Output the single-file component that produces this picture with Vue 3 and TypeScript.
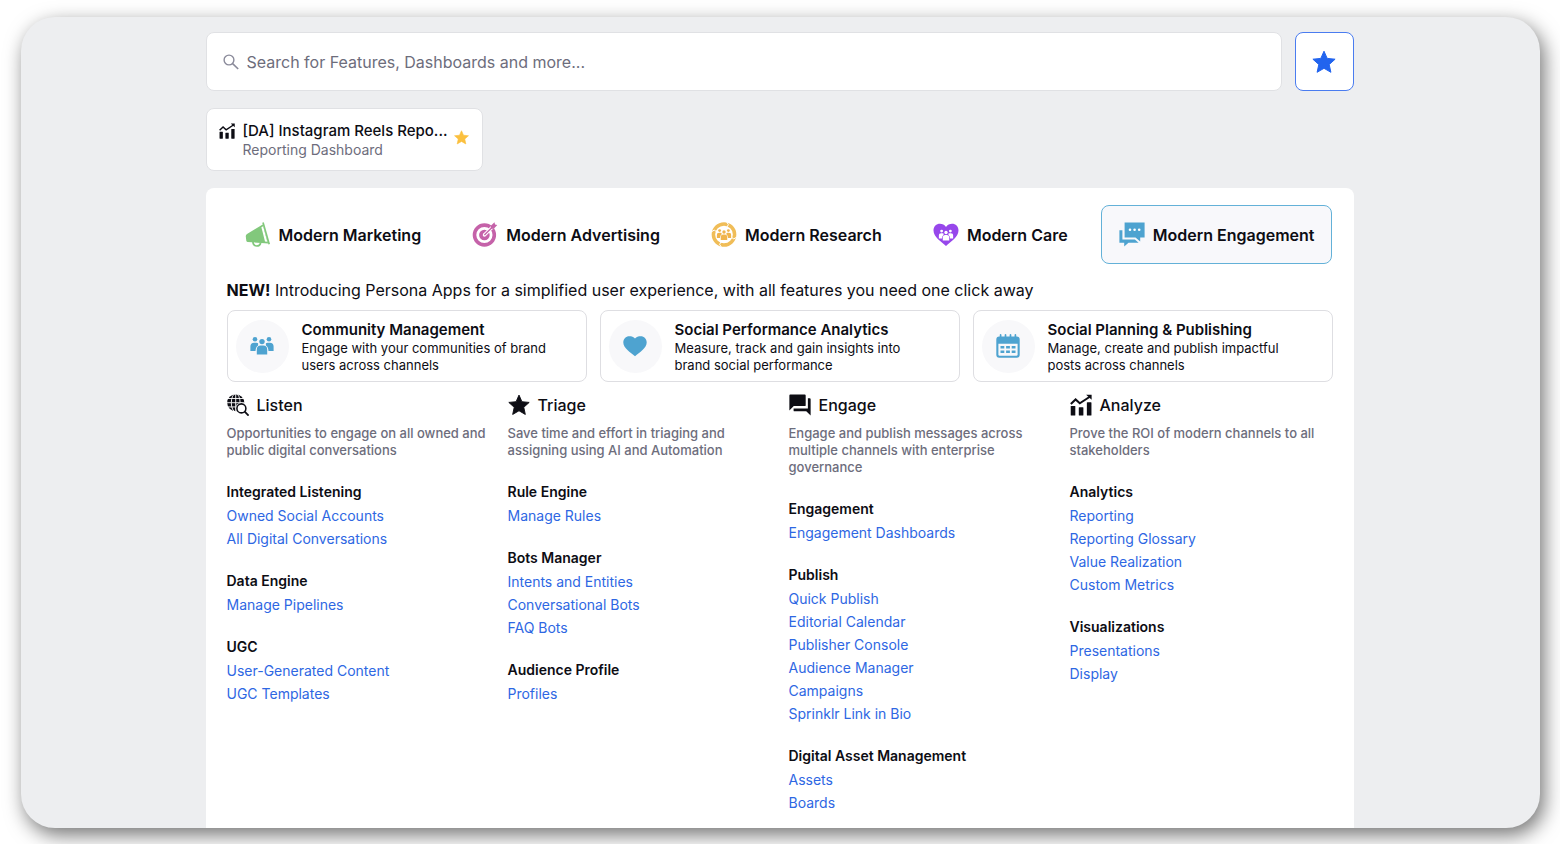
<script setup lang="ts">
import { ref } from 'vue'

interface Group {
  title: string
  links: string[]
}
interface Column {
  title: string
  icon: string
  text: string
  groups: Group[]
}

const query = ref('')
const activeTab = ref('Modern Engagement')

const tabs = [
  { name: 'Modern Marketing', icon: 'megaphone' },
  { name: 'Modern Advertising', icon: 'target' },
  { name: 'Modern Research', icon: 'research' },
  { name: 'Modern Care', icon: 'care' },
  { name: 'Modern Engagement', icon: 'chat' },
]

const apps = [
  { name: 'Community Management', icon: 'people', text: 'Engage with your communities of brand users across channels' },
  { name: 'Social Performance Analytics', icon: 'heart', text: 'Measure, track and gain insights into brand social performance' },
  { name: 'Social Planning & Publishing', icon: 'calendar', text: 'Manage, create and publish impactful posts across channels' },
]

const columns: Column[] = [
  {
    title: 'Listen',
    icon: 'globe',
    text: 'Opportunities to engage on all owned and public digital conversations',
    groups: [
      { title: 'Integrated Listening', links: ['Owned Social Accounts', 'All Digital Conversations'] },
      { title: 'Data Engine', links: ['Manage Pipelines'] },
      { title: 'UGC', links: ['User-Generated Content', 'UGC Templates'] },
    ],
  },
  {
    title: 'Triage',
    icon: 'star',
    text: 'Save time and effort in triaging and assigning using AI and Automation',
    groups: [
      { title: 'Rule Engine', links: ['Manage Rules'] },
      { title: 'Bots Manager', links: ['Intents and Entities', 'Conversational Bots', 'FAQ Bots'] },
      { title: 'Audience Profile', links: ['Profiles'] },
    ],
  },
  {
    title: 'Engage',
    icon: 'forum',
    text: 'Engage and publish messages across multiple channels with enterprise governance',
    groups: [
      { title: 'Engagement', links: ['Engagement Dashboards'] },
      {
        title: 'Publish',
        links: ['Quick Publish', 'Editorial Calendar', 'Publisher Console', 'Audience Manager', 'Campaigns', 'Sprinklr Link in Bio'],
      },
      { title: 'Digital Asset Management', links: ['Assets', 'Boards'] },
    ],
  },
  {
    title: 'Analyze',
    icon: 'chart',
    text: 'Prove the ROI of modern channels to all stakeholders',
    groups: [
      { title: 'Analytics', links: ['Reporting', 'Reporting Glossary', 'Value Realization', 'Custom Metrics'] },
      { title: 'Visualizations', links: ['Presentations', 'Display'] },
    ],
  },
]
</script>

<template>
  <div class="stage">
    <svg class="defs" aria-hidden="true">
      <symbol id="star" viewBox="0 0 24 24">
        <path d="M12 1.200l3.200 7.200 7.900.8-5.900 5.300 1.700 7.800L12 18.300l-6.900 4 1.700-7.800L.9 9.200l7.900-.8z" fill="currentColor" stroke="currentColor" stroke-width="1" stroke-linejoin="round" />
      </symbol>
      <symbol id="chart" viewBox="0 0 24 24">
        <g fill="currentColor">
          <rect x="0.8" y="13" width="5" height="10.5" rx=".6" />
          <rect x="9.6" y="14.5" width="5" height="9" rx=".6" />
          <rect x="18.4" y="9" width="5" height="14.5" rx=".6" />
          <path d="M17.6 .8h6v5.400z" />
        </g>
        <path d="M.9 11l5.200-5 4.600 4.200L21.600 3" fill="none" stroke="currentColor" stroke-width="2.2" />
      </symbol>
      <symbol id="forum" viewBox="0 0 24 24">
        <path d="M1.4 .5h15.800a1 1 0 0 1 1 1v10.700a1 1 0 0 1-1 1H5.200L.4 18V1.500a1 1 0 0 1 1-1z" fill="currentColor" />
        <path d="M20.600 4.700h2a1 1 0 0 1 1 1v17.800l-4.800-4.600H6a1 1 0 0 1-1-1v-2.200h15.600z" fill="currentColor" />
      </symbol>
      <symbol id="globe" viewBox="0 0 24 24">
        <circle cx="9.500" cy="9.500" r="9.300" fill="currentColor" />
        <g fill="none" stroke="#fff" stroke-width="1">
          <ellipse cx="9.500" cy="9.500" rx="4.800" ry="10" />
          <path d="M9.500 0v19M0 9.500h19M1 4.900h17M1 14.100h17" />
        </g>
        <circle cx="15.700" cy="15.700" r="6.300" fill="#fff" />
        <circle cx="15.700" cy="15.700" r="4.900" fill="#fff" stroke="currentColor" stroke-width="1.700" />
        <path d="M19 19l4.600 4.600" stroke="currentColor" stroke-width="2" />
      </symbol>
      <symbol id="search" viewBox="0 0 16 16">
        <circle cx="6" cy="6" r="4.900" fill="none" stroke="currentColor" stroke-width="1.400" />
        <path d="M9.600 9.600l5.600 5.400" stroke="currentColor" stroke-width="1.600" />
      </symbol>
      <symbol id="people" viewBox="0 0 24 20">
        <g fill="currentColor">
          <circle cx="5" cy="3.300" r="2.300" />
          <circle cx="19" cy="3.300" r="2.300" />
          <path d="M0.400 15V10.500a3.800 3.800 0 0 1 3.800-3.800h2.200q1 0 1.700.5V9.500Q5.800 10.700 5.500 15z" />
          <path d="M23.600 15V10.500a3.800 3.800 0 0 0-3.800-3.800h-2.200q-1 0-1.700.5V9.500Q18.200 10.700 18.500 15z" />
          <circle cx="12" cy="5.600" r="2.700" />
          <path d="M6.800 18.500V13.500a4 4 0 0 1 4-4h2.400a4 4 0 0 1 4 4v5z" />
        </g>
      </symbol>
      <symbol id="heart" viewBox="0 0 24 24">
        <path d="M12 22.200C7.500 18.500.3 14.200.3 8.500.3 4.700 3 2.200 6.200 2.200c2.400 0 4.500.6 5.800 2.300 1.300-1.700 3.400-2.300 5.800-2.300 3.200 0 5.900 2.500 5.900 6.300 0 5.700-7.200 10-11.700 13.700z" fill="currentColor" />
      </symbol>
      <symbol id="calendar" viewBox="0 0 24 24">
        <path d="M3.300 2.600h17.400a3 3 0 0 1 3 3v15.200a3 3 0 0 1-3 3H3.300a3 3 0 0 1-3-3V5.600a3 3 0 0 1 3-3z" fill="currentColor" />
        <path d="M2.400 9.800h19.200v10.700a1.300 1.300 0 0 1-1.300 1.300H3.700a1.300 1.300 0 0 1-1.300-1.300z" fill="#f8f8fa" />
        <path d="M4.600 .9v3M9.500 .9v3M14.500 .9v3M19.400 .9v3" stroke="currentColor" stroke-width="1.700" stroke-linecap="round" />
        <path d="M4.500 13.200h3.800M10.100 13.200h3.800M15.700 13.200h3.800M4.500 17.700h3.800M10.100 17.700h3.800M15.700 17.700h3.800" stroke="currentColor" stroke-width="2.400" />
      </symbol>
      <symbol id="megaphone" viewBox="0 0 25 25">
        <path d="M7.300 19.500q.4 4.500 4 4.500 3.200 0 3.900-3" fill="none" stroke="#82c87c" stroke-width="1.700" />
        <path d="M2.300 19.900q-1.100 0-1.500-1.200L.3 14.500q-.2-1.700 1.200-2.600L17.200 2.600l5.500 18.900z" fill="#82c87c" />
        <path d="M15.900 5.300l1.800-1 4.100 15.500-2.300-.4z" fill="#fff" />
        <path d="M17.500.4l6.200 21.800" stroke="#82c87c" stroke-width="1.700" />
      </symbol>
      <symbol id="target" viewBox="0 0 25 25">
        <g fill="none" stroke="#c562a9">
          <circle cx="11.900" cy="13" r="9.900" stroke-width="3.600" />
          <circle cx="11.900" cy="13" r="3.500" stroke-width="3.600" />
        </g>
        <path d="M11.900 13L23 2" stroke="#fff" stroke-width="3.400" />
        <path d="M11.900 13L22 3" stroke="#c562a9" stroke-width="1.300" />
        <path d="M18.300 6.800V3.700L22 .2l.5 2.300 2.300.5-3.500 3.800z" fill="#c562a9" />
      </symbol>
      <symbol id="research" viewBox="0 0 25 25">
        <circle cx="12.500" cy="12.500" r="10.600" fill="none" stroke="#f0bd58" stroke-width="3.500" />
        <path d="M15.200 0l1.700 2.700-1.700 2.600M25 15.200l-2.700 1.700-2.600-1.700M9.800 25l-1.700-2.700 1.700-2.600M0 9.800l2.700-1.700 2.600 1.700" fill="none" stroke="#fff" stroke-width="1" />
        <use href="#people" x="5" y="6.500" width="15" height="12.500" color="#f0b44c" />
      </symbol>
      <symbol id="care" viewBox="0 0 25 25">
        <path d="M12.500 24C7.500 19.500 0 14.800 0 8.500 0 4.500 2.900 1.800 6.400 1.800c2.500 0 4.700 1.200 6.100 3.200 1.400-2 3.600-3.200 6.100-3.200 3.500 0 6.400 2.700 6.400 6.700 0 6.300-7.500 11-12.500 15.500z" fill="#9747eb" />
        <use href="#people" x="5" y="7" width="15" height="12.500" color="#fff" />
      </symbol>
      <symbol id="chat" viewBox="0 0 26 25">
        <path d="M.4 8.200h3v9.300h12.500l3.700 3.200H9.500L5.200 24.600v-3.900H.4z" fill="#4ea3d0" />
        <path d="M5.600.4h20v15h-4.400v4L16.500 15.400H5.600z" fill="#4ea3d0" />
        <g fill="#fff">
          <circle cx="11" cy="7.800" r="1.300" />
          <circle cx="15.600" cy="7.800" r="1.300" />
          <circle cx="20.200" cy="7.800" r="1.300" />
        </g>
      </symbol>
    </svg>

    <div class="frame">
      <main class="content">
        <div class="search-row">
          <label class="search">
            <svg class="search-icon" aria-hidden="true"><use href="#search" /></svg>
            <input v-model="query" type="text" aria-label="Search" placeholder="Search for Features, Dashboards and more..." />
          </label>
          <button class="fav-button" type="button" aria-label="Favorites">
            <svg aria-hidden="true"><use href="#star" /></svg>
          </button>
        </div>

        <article class="pinned">
          <svg class="pinned-icon" aria-hidden="true"><use href="#chart" /></svg>
          <div class="pinned-text">
            <a class="pinned-title" href="#">[DA] Instagram Reels Repo...</a>
            <span class="pinned-kind">Reporting Dashboard</span>
          </div>
          <button class="pinned-star" type="button" aria-label="Remove from favorites">
            <svg aria-hidden="true"><use href="#star" /></svg>
          </button>
        </article>

        <section class="panel">
          <nav class="tabs">
            <button
              v-for="tab in tabs"
              :key="tab.name"
              type="button"
              class="tab"
              :class="{ active: tab.name === activeTab }"
              @click="activeTab = tab.name"
            >
              <svg aria-hidden="true"><use :href="'#' + tab.icon" /></svg>
              <span>{{ tab.name }}</span>
            </button>
          </nav>

          <p class="intro">
            <strong>NEW!</strong> Introducing Persona Apps for a simplified user experience, with all features you need one click away
          </p>

          <div class="apps">
            <a v-for="app in apps" :key="app.name" class="app" href="#">
              <span class="app-icon">
                <svg aria-hidden="true"><use :href="'#' + app.icon" /></svg>
              </span>
              <span class="app-body">
                <span class="app-name">{{ app.name }}</span>
                <span class="app-text">{{ app.text }}</span>
              </span>
            </a>
          </div>

          <div class="columns">
            <section v-for="col in columns" :key="col.title" class="column">
              <h2>
                <svg aria-hidden="true"><use :href="'#' + col.icon" /></svg>
                <span>{{ col.title }}</span>
              </h2>
              <p class="column-text">{{ col.text }}</p>
              <div v-for="group in col.groups" :key="group.title" class="group">
                <h3>{{ group.title }}</h3>
                <ul>
                  <li v-for="link in group.links" :key="link"><a href="#">{{ link }}</a></li>
                </ul>
              </div>
            </section>
          </div>
        </section>
      </main>
    </div>
  </div>
</template>

<style>
body {
  margin: 0;
  background: #fff;
}
</style>

<style scoped>
.stage {
  box-sizing: border-box;
  min-height: 100vh;
  padding: 17px 20px 16px 21px;
  display: flex;
  overflow: hidden;
  font-family: Inter, 'Liberation Sans', sans-serif;
  color: #0d0d14;
}
.stage *,
.stage *::before {
  box-sizing: border-box;
}
.defs {
  position: absolute;
  width: 0;
  height: 0;
}
button {
  font: inherit;
  color: inherit;
  padding: 0;
  cursor: pointer;
}
a {
  text-decoration: none;
  color: inherit;
}
svg {
  display: block;
  flex: none;
}
.frame {
  flex: 1;
  display: flex;
  justify-content: center;
  padding: 15px 26px 0 24px;
  border-radius: 34px;
  background: #edeef0;
  box-shadow: 4px 7px 20px rgba(0, 0, 0, 0.55);
  overflow: hidden;
}
.content {
  flex: 1;
  max-width: 1148px;
  display: flex;
  flex-direction: column;
}
.search-row {
  display: flex;
  gap: 13px;
}
.search {
  flex: 1;
  height: 59px;
  display: flex;
  align-items: center;
  gap: 8px;
  padding: 0 16px;
  background: #fff;
  border: 1px solid #e0e1e4;
  border-radius: 8px;
  color: #6d6d7c;
}
.search-icon {
  width: 16px;
  height: 16px;
  color: #8a8a9a;
}
.search input {
  flex: 1;
  border: 0;
  outline: 0;
  padding: 0;
  background: none;
  font: inherit;
  font-size: 16px;
  color: #0d0d14;
}
.search input::placeholder {
  color: #6d6d7c;
  opacity: 1;
}
.fav-button {
  width: 59px;
  height: 59px;
  display: grid;
  place-items: center;
  background: #fff;
  border: 1px solid #4a7cf0;
  border-radius: 8px;
  color: #2264ee;
}
.fav-button svg {
  width: 24px;
  height: 24px;
}
.pinned {
  width: 277px;
  height: 63px;
  margin-top: 17px;
  padding: 12px 13px 11px 12px;
  display: flex;
  align-items: flex-start;
  background: #fff;
  border: 1px solid #e0e1e4;
  border-radius: 8px;
}
.pinned-icon {
  width: 16px;
  height: 16px;
  margin-top: 2px;
}
.pinned-text {
  flex: 1;
  margin-left: 8px;
  display: flex;
  flex-direction: column;
}
.pinned-title {
  font-size: 15px;
  font-weight: 500;
  line-height: 19px;
  white-space: nowrap;
}
.pinned-kind {
  font-size: 14px;
  line-height: 19px;
  color: #6d6d7c;
}
.pinned-star {
  margin-top: 9px;
  border: 0;
  background: none;
  color: #fbc03f;
}
.pinned-star svg {
  width: 15px;
  height: 15px;
}
.panel {
  flex: 1;
  margin-top: 17px;
  padding: 17px 21px 12px;
  background: #fff;
  border-radius: 8px 8px 0 0;
}
.tabs {
  display: flex;
  justify-content: space-between;
}
.tab {
  height: 59px;
  display: flex;
  align-items: center;
  gap: 8px;
  padding: 0 17px;
  border: 1px solid transparent;
  border-radius: 8px;
  background: none;
  font-size: 16px;
  font-weight: 600;
  white-space: nowrap;
}
.tab.active {
  background: #f8f8fb;
  border-color: #63b1d8;
}
.tab svg {
  width: 26px;
  height: 25px;
}
.intro {
  margin: 15px 0 9px;
  font-size: 16px;
  line-height: 22px;
}
.intro strong {
  font-weight: 700;
}
.apps {
  display: grid;
  grid-template-columns: repeat(3, 1fr);
  gap: 13px;
}
.app {
  display: flex;
  align-items: center;
  gap: 13px;
  padding: 7px 8px;
  border: 1px solid #dedee2;
  border-radius: 8px;
}
.app-icon {
  width: 53px;
  height: 53px;
  flex: none;
  display: grid;
  place-items: center;
  border-radius: 50%;
  background: #f8f8fa;
  color: #4ea3d0;
}
.app-icon svg {
  width: 24px;
  height: 24px;
}
.app-body {
  display: flex;
  flex-direction: column;
  max-width: 256px;
  padding-top: 2px;
}
.app-name {
  font-size: 15px;
  font-weight: 600;
  line-height: 20px;
}
.app-text {
  font-size: 13px;
  line-height: 17px;
}
.columns {
  display: grid;
  grid-template-columns: repeat(4, 1fr);
  gap: 18px;
  margin-top: 12px;
}
.column h2 {
  margin: 0;
  display: flex;
  align-items: center;
  gap: 8px;
  font-size: 16px;
  font-weight: 500;
  line-height: 22px;
}
.column h2 svg {
  width: 22px;
  height: 22px;
}
.column-text {
  margin: 9px 0 21px;
  font-size: 13px;
  font-weight: 500;
  line-height: 17px;
  color: #6d6d7c;
}
.group {
  margin-bottom: 19px;
}
.group:last-child {
  margin-bottom: 0;
}
.group h3 {
  margin: 0;
  font-size: 14px;
  font-weight: 600;
  line-height: 24px;
}
.group ul {
  margin: 0;
  padding: 0;
  list-style: none;
}
.group li {
  font-size: 14px;
  line-height: 23px;
}
.group a {
  color: #2e67e3;
}
</style>
